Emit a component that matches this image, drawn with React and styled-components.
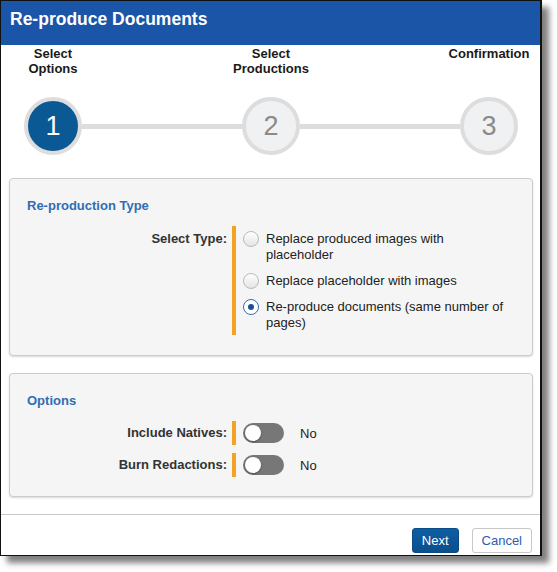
import React from "react";
import styled, { createGlobalStyle } from "styled-components";

const GlobalStyle = createGlobalStyle`
  body {
    margin: 0;
    background: #fff;
    font-family: "Liberation Sans", Arial, sans-serif;
  }
`;

function App() {
  return (
    <Page>
      <GlobalStyle />
      <Dialog>
        <Header>Re-produce Documents</Header>

        <StepLabels>
          <StepLabel>
            Select
            <br />
            Options
          </StepLabel>
          <StepLabel>
            Select
            <br />
            Productions
          </StepLabel>
          <StepLabel>Confirmation</StepLabel>
        </StepLabels>

        <StepTrack>
          <Circle active>1</Circle>
          <Connector />
          <Circle>2</Circle>
          <Connector />
          <Circle>3</Circle>
        </StepTrack>

        <Panel>
          <PanelTitle>Re-production Type</PanelTitle>
          <FieldRow>
            <FieldLabel>Select Type:</FieldLabel>
            <Field>
              <RadioList>
                <RadioRow>
                  <Radio />
                  <RadioText>Replace produced images with placeholder</RadioText>
                </RadioRow>
                <RadioRow>
                  <Radio />
                  <RadioText>Replace placeholder with images</RadioText>
                </RadioRow>
                <RadioRow>
                  <Radio checked />
                  <RadioText>Re-produce documents (same number of pages)</RadioText>
                </RadioRow>
              </RadioList>
            </Field>
          </FieldRow>
        </Panel>

        <Panel>
          <PanelTitle>Options</PanelTitle>
          <ToggleList>
            <ToggleRow>
              <ToggleLabel>Include Natives:</ToggleLabel>
              <ToggleField>
                <Toggle />
                <ToggleValue>No</ToggleValue>
              </ToggleField>
            </ToggleRow>
            <ToggleRow>
              <ToggleLabel>Burn Redactions:</ToggleLabel>
              <ToggleField>
                <Toggle />
                <ToggleValue>No</ToggleValue>
              </ToggleField>
            </ToggleRow>
          </ToggleList>
        </Panel>

        <Footer>
          <Button primary>Next</Button>
          <Button>Cancel</Button>
        </Footer>
      </Dialog>
    </Page>
  );
}

export default App;

const Page = styled.div`
  width: 557px;
  height: 572px;
`;

const Dialog = styled.div`
  width: 542px;
  height: 556px;
  box-sizing: border-box;
  border: 1px solid #111;
  border-right-width: 2px;
  background: #fff;
  box-shadow: 7px 7px 6px rgba(0, 0, 0, 0.5);
  display: flex;
  flex-direction: column;
`;

const Header = styled.div`
  height: 44px;
  flex-shrink: 0;
  box-sizing: border-box;
  padding: 8px 9px;
  background: #1b55a7;
  color: #fff;
  font-size: 17.5px;
  line-height: 20px;
  font-weight: bold;
`;

const StepLabels = styled.div`
  display: flex;
  justify-content: space-between;
  padding: 1px 22px 0 23px;
`;

const StepLabel = styled.div`
  width: 58px;
  display: flex;
  justify-content: center;
  text-align: center;
  white-space: nowrap;
  font-size: 13px;
  line-height: 15px;
  font-weight: bold;
  color: #1a1a1a;
`;

const StepTrack = styled.div`
  display: flex;
  align-items: center;
  padding: 0 22px 0 23px;
  margin-top: 21px;
`;

const Circle = styled.div`
  width: 58px;
  height: 58px;
  box-sizing: border-box;
  border-radius: 50%;
  border: 4px solid #dddddd;
  background: ${(p) => (p.active ? "#0b5994" : "#f0f1f2")};
  color: ${(p) => (p.active ? "#fff" : "#8a8a8a")};
  display: flex;
  align-items: center;
  justify-content: center;
  font-size: 27px;
  flex-shrink: 0;
`;

const Connector = styled.div`
  flex: 1;
  height: 5px;
  background: #dddddd;
`;

const Panel = styled.div`
  flex-shrink: 0;
  margin: 23px 7px 0 8px;
  padding: 19px 17px 20px;
  background: #f5f5f5;
  border: 1px solid #cccccc;
  border-radius: 4px;
  box-shadow: 0 1px 2px rgba(0, 0, 0, 0.15);

  & + & {
    margin-top: 17px;
    padding-bottom: 19px;
  }
`;

const PanelTitle = styled.div`
  font-size: 13px;
  line-height: 16px;
  font-weight: bold;
  color: #2f6db5;
  margin-bottom: 12px;
`;

const FieldRow = styled.div`
  display: flex;
  align-items: stretch;
`;

const FieldLabel = styled.div`
  width: 200px;
  margin-right: 5px;
  padding-top: 5px;
  text-align: right;
  font-size: 13px;
  line-height: 16px;
  font-weight: bold;
  color: #333;
`;

const Field = styled.div`
  border-left: 4px solid #f4a223;
  padding: 5px 0 4px 7px;
`;

const RadioList = styled.div`
  display: flex;
  flex-direction: column;
  gap: 10px;
`;

const RadioRow = styled.label`
  display: flex;
  align-items: flex-start;
  gap: 7px;
`;

const Radio = styled.span`
  width: 16px;
  height: 16px;
  box-sizing: border-box;
  border-radius: 50%;
  flex-shrink: 0;
  border: 1px solid ${(p) => (p.checked ? "#3a6cb0" : "#b9b9b9")};
  background: ${(p) =>
    p.checked ? "#fff" : "linear-gradient(#ffffff, #e4e4e4)"};
  display: flex;
  align-items: center;
  justify-content: center;

  &::after {
    content: "";
    display: ${(p) => (p.checked ? "block" : "none")};
    width: 6px;
    height: 6px;
    border-radius: 50%;
    background: #1e4f8f;
  }
`;

const RadioText = styled.span`
  width: 246px;
  font-size: 13px;
  line-height: 16px;
  color: #222;
`;

const ToggleList = styled.div`
  display: flex;
  flex-direction: column;
  gap: 8px;
`;

const ToggleRow = styled.div`
  display: flex;
  height: 24px;
`;

const ToggleLabel = styled.div`
  width: 200px;
  margin-right: 5px;
  text-align: right;
  align-self: center;
  font-size: 13px;
  line-height: 16px;
  font-weight: bold;
  color: #333;
`;

const ToggleField = styled.div`
  display: flex;
  align-items: center;
  gap: 16px;
  border-left: 4px solid #f4a223;
  padding-left: 7px;
`;

const Toggle = styled.span`
  position: relative;
  width: 41px;
  height: 20px;
  border-radius: 10px;
  background: #777;

  &::after {
    content: "";
    position: absolute;
    left: 2px;
    top: 2px;
    width: 16px;
    height: 16px;
    border-radius: 50%;
    background: #fff;
    box-shadow: 0 1px 2px rgba(0, 0, 0, 0.4);
  }
`;

const ToggleValue = styled.span`
  font-size: 13px;
  color: #222;
`;

const Footer = styled.div`
  flex-shrink: 0;
  margin-top: 17px;
  border-top: 1px solid #c8c8c8;
  padding: 13px 8px 0;
  display: flex;
  justify-content: flex-end;
  gap: 13px;
`;

const Button = styled.button`
  height: 25px;
  padding: 0 9px;
  border-radius: 3px;
  font-family: "Liberation Sans", Arial, sans-serif;
  font-size: 13px;
  cursor: pointer;
  border: 1px solid ${(p) => (p.primary ? "#0a4a85" : "#c8c8c8")};
  background: ${(p) =>
    p.primary ? "linear-gradient(#0e5ea3, #0b4f8c)" : "#fff"};
  color: ${(p) => (p.primary ? "#fff" : "#2a5db0")};
`;
